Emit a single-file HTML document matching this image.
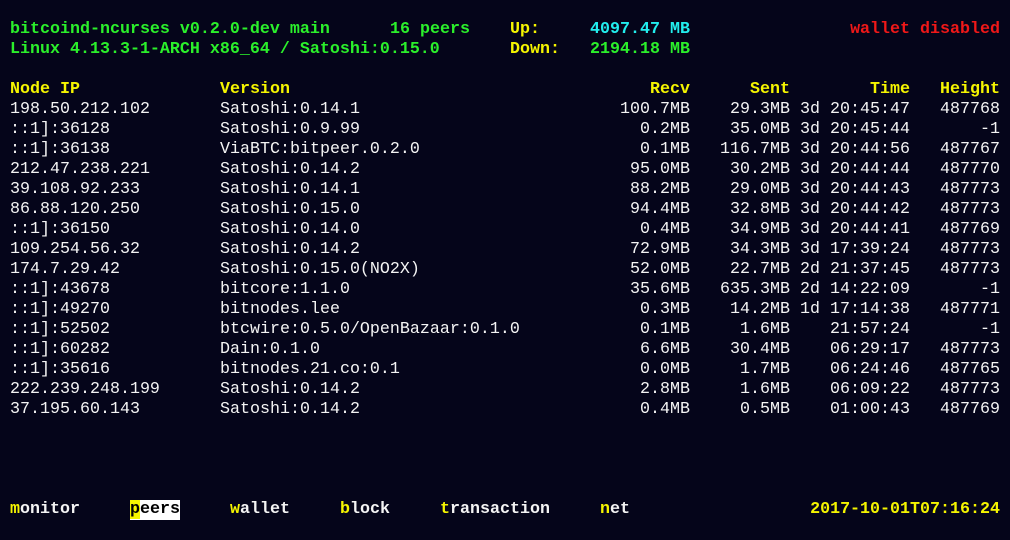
<!DOCTYPE html>
<html><head><style>
body{margin:0;width:1010px;height:540px;background:#05051a;overflow:hidden;font-family:"Liberation Mono",monospace;font-size:16.67px;color:#f0f0f0}
.r{position:absolute;left:0;width:1010px;height:20px;line-height:20px;white-space:pre}
.r span{position:absolute;top:0}
.r span i{font-style:normal;color:#f5f500}
.b{font-weight:bold}
.g{color:#2bf02b}.y{color:#f5f500}.c{color:#22eeee}.rd{color:#f01818}.w{color:#f4f4f4}
</style></head><body>
<div class="r b" style="top:20px"><span class="g" style="left:10px">bitcoind-ncurses v0.2.0-dev main</span><span class="g" style="left:390px">16 peers</span><span class="y" style="left:510px">Up:</span><span class="c" style="left:590px">4097.47 MB</span><span class="rd" style="right:10px">wallet disabled</span></div>
<div class="r b" style="top:40px"><span class="g" style="left:10px">Linux 4.13.3-1-ARCH x86_64 / Satoshi:0.15.0</span><span class="y" style="left:510px">Down:</span><span class="g" style="left:590px">2194.18 MB</span></div>
<div class="r b y" style="top:80px"><span style="left:10px">Node IP</span><span style="left:220px">Version</span><span style="right:320px">Recv</span><span style="right:220px">Sent</span><span style="right:100px">Time</span><span style="right:10px">Height</span></div>
<div id="rows"></div>
<div class="r b" style="top:500px"><span class="w" style="left:10px"><i>m</i>onitor</span><span style="left:130px;background:#fff;color:#000"><i style="background:#f5f500;color:#000">p</i>eers</span><span class="w" style="left:230px"><i>w</i>allet</span><span class="w" style="left:340px"><i>b</i>lock</span><span class="w" style="left:440px"><i>t</i>ransaction</span><span class="w" style="left:600px"><i>n</i>et</span><span class="y" style="right:10px">2017-10-01T07:16:24</span></div>
<script>
var d=[
["198.50.212.102","Satoshi:0.14.1","100.7MB","29.3MB","3d 20:45:47","487768"],
["::1]:36128","Satoshi:0.9.99","0.2MB","35.0MB","3d 20:45:44","-1"],
["::1]:36138","ViaBTC:bitpeer.0.2.0","0.1MB","116.7MB","3d 20:44:56","487767"],
["212.47.238.221","Satoshi:0.14.2","95.0MB","30.2MB","3d 20:44:44","487770"],
["39.108.92.233","Satoshi:0.14.1","88.2MB","29.0MB","3d 20:44:43","487773"],
["86.88.120.250","Satoshi:0.15.0","94.4MB","32.8MB","3d 20:44:42","487773"],
["::1]:36150","Satoshi:0.14.0","0.4MB","34.9MB","3d 20:44:41","487769"],
["109.254.56.32","Satoshi:0.14.2","72.9MB","34.3MB","3d 17:39:24","487773"],
["174.7.29.42","Satoshi:0.15.0(NO2X)","52.0MB","22.7MB","2d 21:37:45","487773"],
["::1]:43678","bitcore:1.1.0","35.6MB","635.3MB","2d 14:22:09","-1"],
["::1]:49270","bitnodes.lee","0.3MB","14.2MB","1d 17:14:38","487771"],
["::1]:52502","btcwire:0.5.0/OpenBazaar:0.1.0","0.1MB","1.6MB","21:57:24","-1"],
["::1]:60282","Dain:0.1.0","6.6MB","30.4MB","06:29:17","487773"],
["::1]:35616","bitnodes.21.co:0.1","0.0MB","1.7MB","06:24:46","487765"],
["222.239.248.199","Satoshi:0.14.2","2.8MB","1.6MB","06:09:22","487773"],
["37.195.60.143","Satoshi:0.14.2","0.4MB","0.5MB","01:00:43","487769"]];
var h="";d.forEach(function(r,i){h+='<div class="r w" style="top:'+(100+i*20)+'px"><span style="left:10px">'+r[0]+'</span><span style="left:220px">'+r[1]+'</span><span style="right:320px">'+r[2]+'</span><span style="right:220px">'+r[3]+'</span><span style="right:100px">'+r[4]+'</span><span style="right:10px">'+r[5]+'</span></div>';});
document.getElementById("rows").innerHTML=h;
</script>
</body></html>
